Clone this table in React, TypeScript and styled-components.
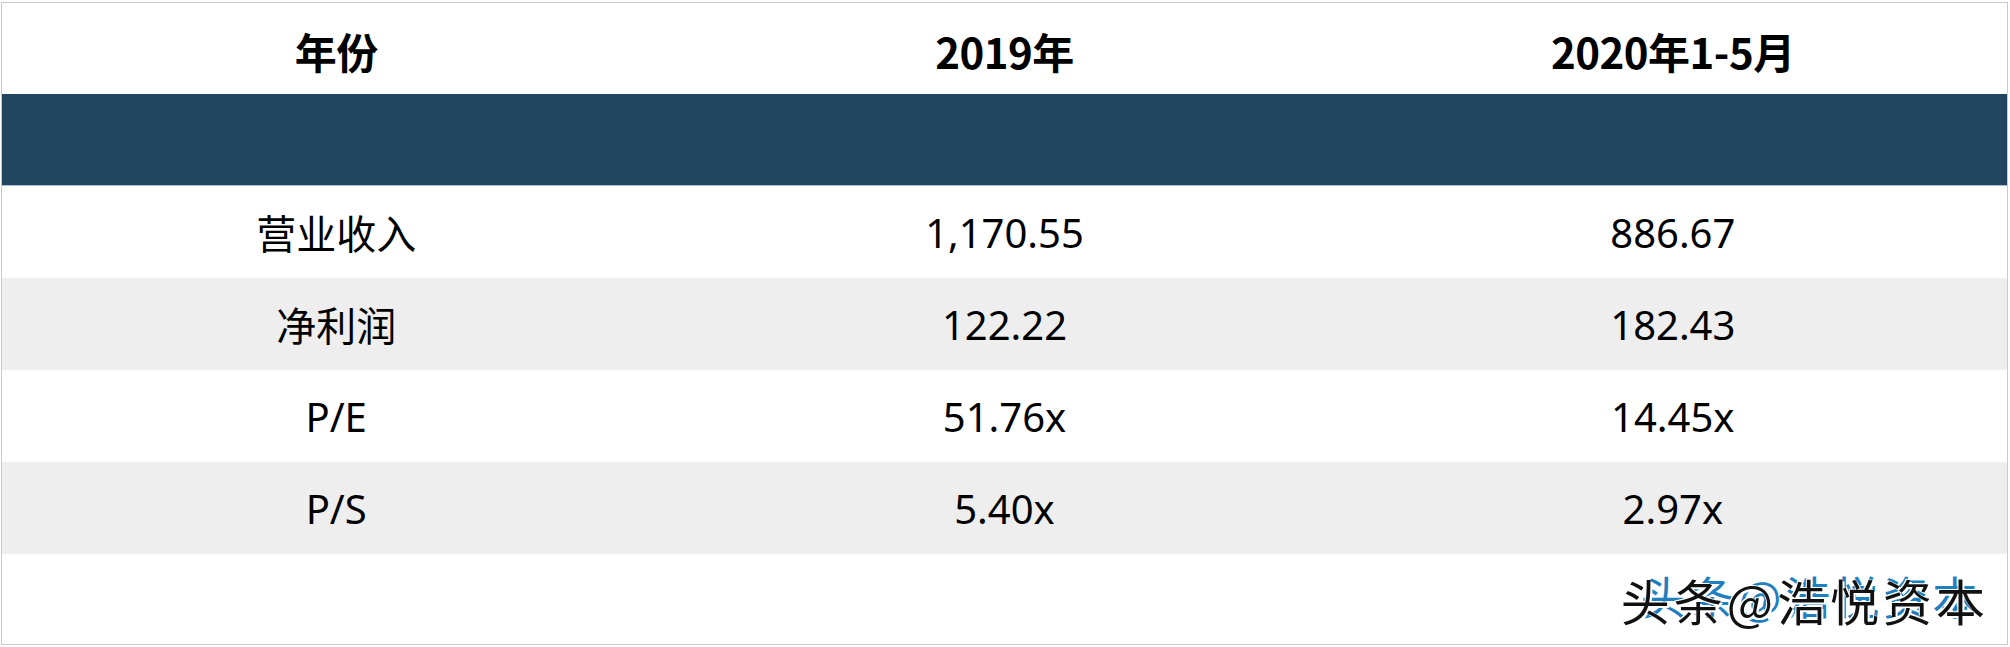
import styled, { createGlobalStyle } from "styled-components";

const GlobalStyle = createGlobalStyle`
    html,
    body {
        margin: 0;
        padding: 0;
        background: #ffffff;
    }

    body {
        font-family: "Noto Sans", "Noto Sans CJK SC", sans-serif;
    }
`;

const rows = [
    { name: "营业收入", y2019: "1,170.55", y2020: "886.67" },
    { name: "净利润", y2019: "122.22", y2020: "182.43" },
    { name: "P/E", y2019: "51.76x", y2020: "14.45x" },
    { name: "P/S", y2019: "5.40x", y2020: "2.97x" },
];

const App = () => {
    return (
        <>
            <GlobalStyle />
            <Page>
                <Table>
                    <HeadRow>
                        <HeadCell>年份</HeadCell>
                        <HeadCell>2019年</HeadCell>
                        <HeadCell>2020年1-5月</HeadCell>
                    </HeadRow>
                    <Band />
                    {rows.map((row, i) => (
                        <Row key={row.name} $striped={i % 2 === 1}>
                            <Cell>{row.name}</Cell>
                            <Cell>{row.y2019}</Cell>
                            <Cell>{row.y2020}</Cell>
                        </Row>
                    ))}
                    <Footer>
                        <Watermark>
                            <WatermarkShadow aria-hidden>头条@浩悦资本</WatermarkShadow>
                            <WatermarkText>头条@浩悦资本</WatermarkText>
                        </Watermark>
                    </Footer>
                </Table>
            </Page>
        </>
    );
};

const Page = styled.div`
    padding: 2px 0 0 1px;
    width: 2010px;
    box-sizing: border-box;
`;

const Table = styled.div`
    width: 2007px;
    box-sizing: border-box;
    border: 1px solid #c9c9c9;
    display: flex;
    flex-direction: column;
`;

const HeadRow = styled.div`
    display: grid;
    grid-template-columns: repeat(3, 1fr);
    height: 91px;
    align-items: center;
    padding-top: 4px;
    box-sizing: border-box;
`;

const HeadCell = styled.div`
    text-align: center;
    font-family: "Noto Sans CJK SC", sans-serif;
    font-weight: 700;
    font-size: 42px;
    color: #000000;
    letter-spacing: -0.5px;
`;

const Band = styled.div`
    height: 92px;
    background: #21455e;
    border-bottom: 1px solid #a9bfcf;
    box-sizing: border-box;
`;

const Row = styled.div<{ $striped: boolean }>`
    display: grid;
    grid-template-columns: repeat(3, 1fr);
    height: 92px;
    align-items: center;
    background: ${({ $striped }) => ($striped ? "#eeeeee" : "#ffffff")};
`;

const Cell = styled.div`
    text-align: center;
    font-family: "Noto Sans", "Noto Sans CJK SC", sans-serif;
    font-size: 40px;
    color: #000000;
`;

const Footer = styled.div`
    height: 90px;
    display: flex;
    align-items: center;
    justify-content: flex-end;
    padding-right: 18px;
`;

const Watermark = styled.div`
    position: relative;
    font-family: "Noto Sans CJK SC", sans-serif;
    font-size: 49px;
    line-height: 1;
    letter-spacing: 4px;
`;

const WatermarkShadow = styled.span`
    position: absolute;
    left: 20px;
    top: -2px;
    color: #1f7fbf;
    font-size: 45px;
    white-space: nowrap;
`;

const WatermarkText = styled.span`
    position: relative;
    color: #111111;
    white-space: nowrap;
    text-shadow: 2px 2px 0 #ffffff, -1px -1px 0 #ffffff;
`;

export default App;
